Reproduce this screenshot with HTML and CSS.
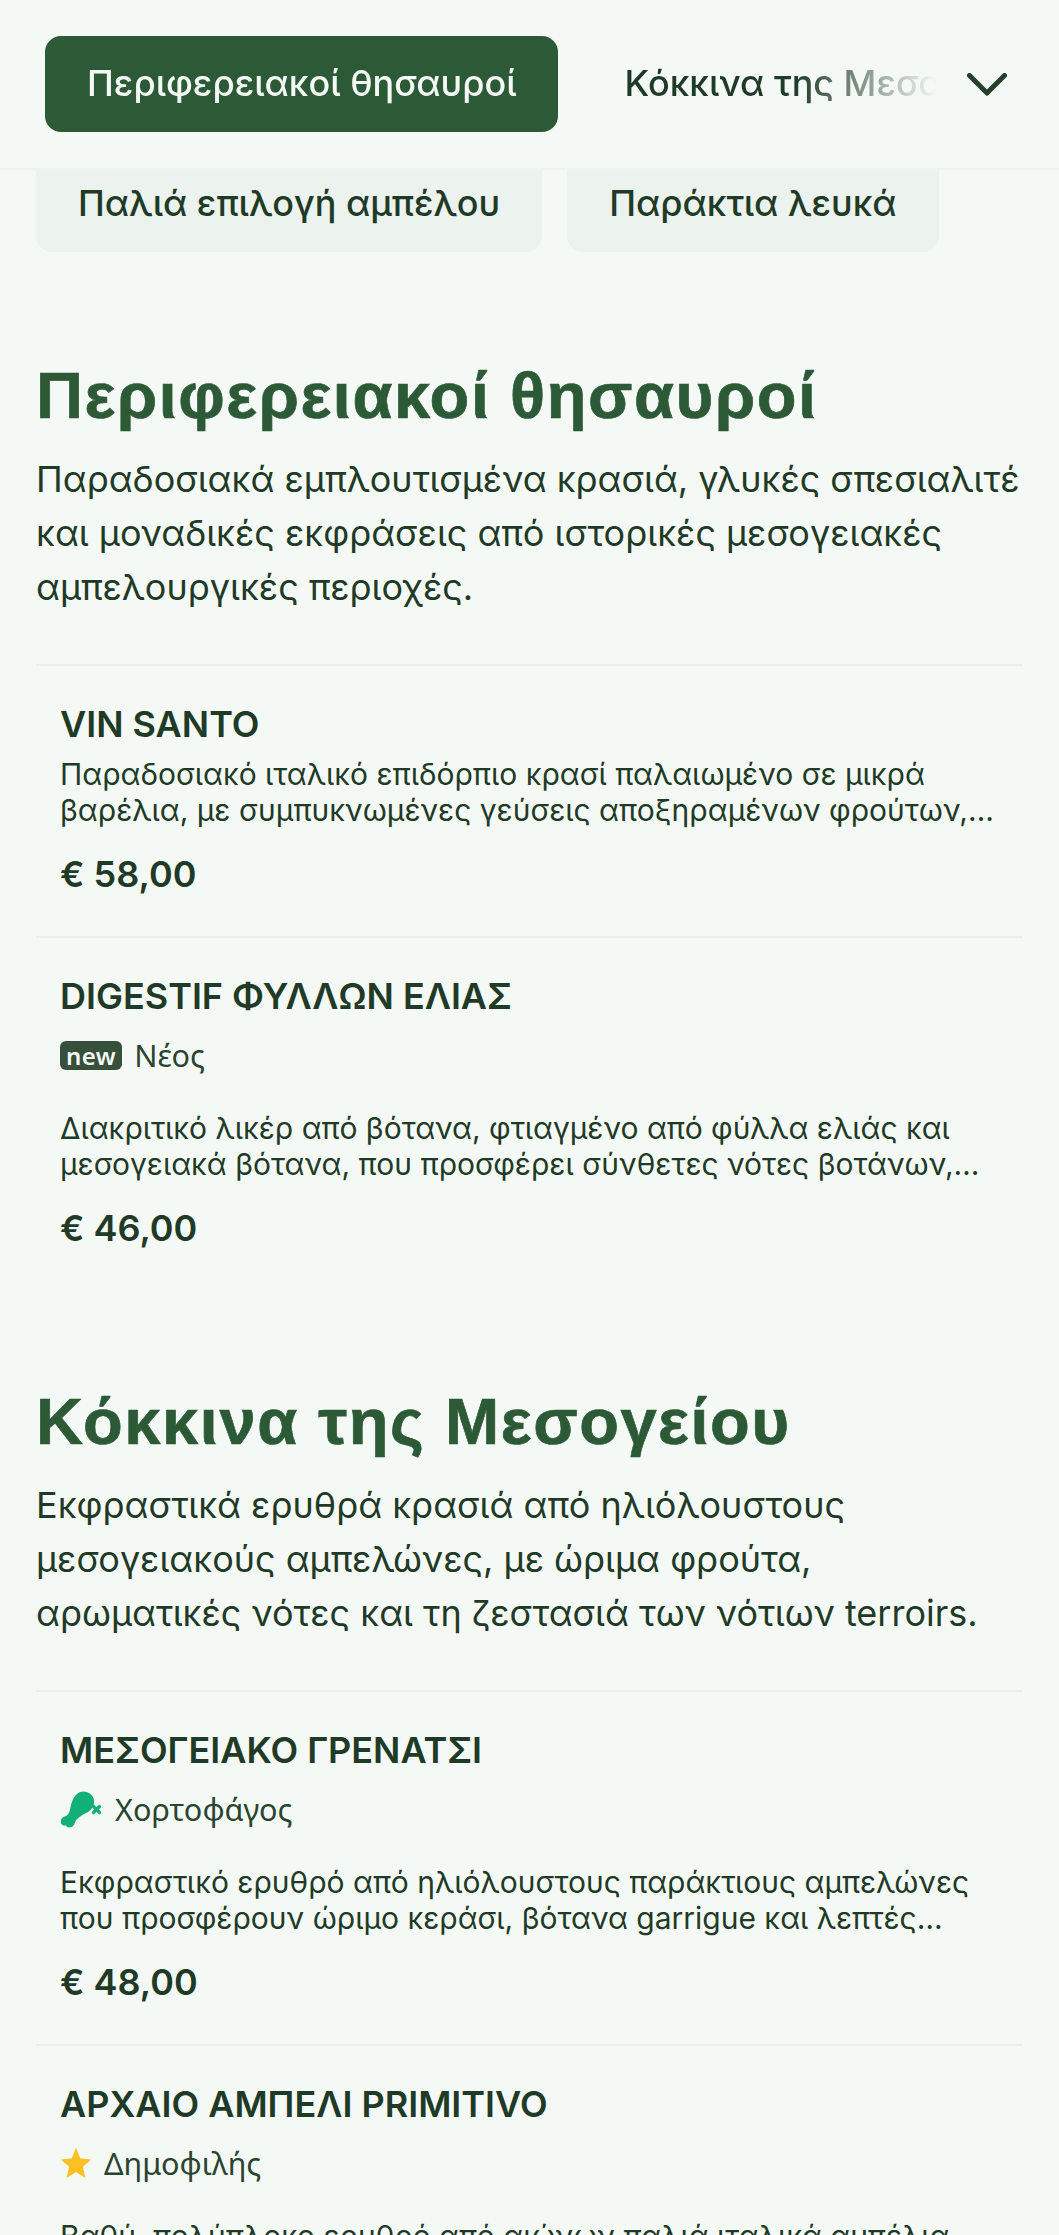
FILE: index.html
```html
<!DOCTYPE html>
<html lang="el">
<head>
<meta charset="utf-8">
<title>Μενού κρασιών</title>
<link rel="stylesheet" href="styles.css">
</head>
<body>
<header class="topbar">
  <nav class="tabs">
    <a class="tab tab-active">Περιφερειακοί θησαυροί</a>
    <a class="tab">Κόκκινα της Μεσογείου</a>
  </nav>
  <svg class="chevron" viewBox="0 0 40 23" width="40" height="23"><path d="M2.5 2.5 L20 20 L37.5 2.5" fill="none" stroke="#25402d" stroke-width="5" stroke-linecap="round" stroke-linejoin="round"/></svg>
</header>
<div class="pills">
  <a class="pill">Παλιά επιλογή αμπέλου</a>
  <a class="pill">Παράκτια λευκά</a>
</div>
<main>
  <section class="section">
    <h2 class="section-title">Περιφερειακοί θησαυροί</h2>
    <p class="section-desc">Παραδοσιακά εμπλουτισμένα κρασιά, γλυκές σπεσιαλιτέ και μοναδικές εκφράσεις από ιστορικές μεσογειακές αμπελουργικές περιοχές.</p>
    <article class="item">
      <h3 class="item-name">VIN SANTO</h3>
      <p class="item-desc">Παραδοσιακό ιταλικό επιδόρπιο κρασί παλαιωμένο σε μικρά βαρέλια, με συμπυκνωμένες γεύσεις αποξηραμένων φρούτων, μελιού και ξηρών καρπών για το τέλος του γεύματος.</p>
      <div class="item-price">€ 58,00</div>
    </article>
    <article class="item">
      <h3 class="item-name">DIGESTIF ΦΥΛΛΩΝ ΕΛΙΑΣ</h3>
      <div class="tag"><span class="new-badge">new</span><span>Νέος</span></div>
      <p class="item-desc">Διακριτικό λικέρ από βότανα, φτιαγμένο από φύλλα ελιάς και μεσογειακά βότανα, που προσφέρει σύνθετες νότες βοτάνων,&#8230;</p>
      <div class="item-price">€ 46,00</div>
    </article>
  </section>
  <section class="section">
    <h2 class="section-title">Κόκκινα της Μεσογείου</h2>
    <p class="section-desc">Εκφραστικά ερυθρά κρασιά από ηλιόλουστους μεσογειακούς αμπελώνες, με ώριμα φρούτα, αρωματικές νότες και τη ζεστασιά των νότιων terroirs.</p>
    <article class="item">
      <h3 class="item-name">ΜΕΣΟΓΕΙΑΚΟ ΓΡΕΝΑΤΣΙ</h3>
      <div class="tag">
        <svg class="tag-icon" viewBox="0 0 42 37" width="42" height="37"><path fill="#12b076" d="M20 1 C27 -1 33 3 34 9 C35 15 31 20 26 22 C22 24 19 26 16 29 C15 31 15 33 13 35 C11 37 7 37 6 34.5 C3 35 0 33 1 30 C1 27 3 26 6 25 C8 24 9 22 10 19 C11 13 13 4 20 1 Z"/><path d="M33.5 15.5 L39.5 21.5 M39.5 15.5 L33.5 21.5" stroke="#12b076" stroke-width="3.2" fill="none" stroke-linecap="round"/></svg>
        <span class="veg-label">Χορτοφάγος</span>
      </div>
      <p class="item-desc">Εκφραστικό ερυθρό από ηλιόλουστους παράκτιους αμπελώνες που προσφέρουν ώριμο κεράσι, βότανα garrigue και λεπτές νότες μπαχαρικών με απαλές τανίνες και μακρά επίγευση.</p>
      <div class="item-price">€ 48,00</div>
    </article>
    <article class="item">
      <h3 class="item-name">ΑΡΧΑΙΟ ΑΜΠΕΛΙ PRIMITIVO</h3>
      <div class="tag">
        <svg class="tag-icon" viewBox="0 0 24 24" width="32" height="32"><path fill="#fdbf21" d="M12 .5 L15.2 8.6 L23.5 9.4 L17.2 14.8 L19 23.3 L12 18.8 L5 23.3 L6.8 14.8 L.5 9.4 L8.8 8.6 Z"/></svg>
        <span>Δημοφιλής</span>
      </div>
      <p class="item-desc">Βαθύ, πολύπλοκο ερυθρό από αιώνων παλιά ιταλικά αμπέλια πλούσια σε φρούτα και μπαχαρικά.</p>
      <div class="item-price">€ 52,00</div>
    </article>
  </section>
</main>
</body>
</html>
```
FILE: styles.css
```css
* { box-sizing: border-box; }
html, body { margin: 0; padding: 0; height: 2235px; overflow: hidden; }
body { background: #f4f9f5; color: #1f3a26; font-family: Inter, "Noto Sans", sans-serif; }

.topbar { position: relative; z-index: 2; height: 170px; background: #f4f9f5; border-bottom: 2px solid #eef3ef; display: flex; align-items: flex-start; padding: 36px 52px 0 45px; }
.tabs { flex: 1; display: flex; gap: 25px; min-width: 0; overflow: hidden; white-space: nowrap; -webkit-mask-image: linear-gradient(to right, #000 84%, transparent 100%); mask-image: linear-gradient(to right, #000 84%, transparent 100%); margin-right: 30px; }
.tab { flex: none; height: 96px; padding: 0 41px 0 42px; font-size: 36px; font-weight: 500; line-height: 94px; border-radius: 16px; color: #1f3a26; }
.tab-active { background: #2d5a36; color: #f4f9f5; }
.chevron { flex: none; margin-top: 37px; }

.pills { display: flex; gap: 24px; padding: 0 36px; margin-top: -14px; }
.pill { height: 96px; line-height: 94px; padding: 0 42px; font-size: 36px; font-weight: 500; background: #ecf2ed; border-radius: 16px; white-space: nowrap; color: #1f3a26; }
.pill:first-child { margin-right: 1px; }

.section { padding: 0 36px; }
.section:first-child { margin-top: 104px; }
.section + .section { margin-top: 92px; }
.section-title { margin: 0; font-family: "Liberation Sans", Arial, sans-serif; font-size: 65px; line-height: 80px; font-weight: 700; letter-spacing: 1.55px; -webkit-text-stroke: 0.7px #2d5a36; color: #2d5a36; }
.section-desc { margin: 16px 0 0; font-size: 36px; line-height: 54px; color: #1f3a26; padding-bottom: 50px; }

.item { border-top: 2px solid #e9efea; padding: 34px 24px 37px; }
.item-name { margin: 0; font-size: 36px; line-height: 48px; font-weight: 600; color: #1f3a26; }
.item-desc { margin: 8px 0 0; font-size: 30px; line-height: 36px; color: #1f3a26; display: -webkit-box; -webkit-line-clamp: 2; -webkit-box-orient: vertical; overflow: hidden; }
.item-price { margin-top: 21px; font-size: 36px; line-height: 50px; font-weight: 600; color: #1f3a26; }

.tag { display: flex; align-items: center; gap: 12px; margin-top: 15px; margin-bottom: 35px; font-family: "Noto Sans", sans-serif; font-size: 30.6px; line-height: 40px; color: #2a4430; }
.tag + .item-desc { margin-top: 0; }
.veg-label { margin-left: 1px; }
.new-badge { background: #37503c; color: #f4f9f5; font-size: 24px; line-height: 29px; font-weight: 600; padding: 0 6px; border-radius: 6px; letter-spacing: 0.02em; }
```
